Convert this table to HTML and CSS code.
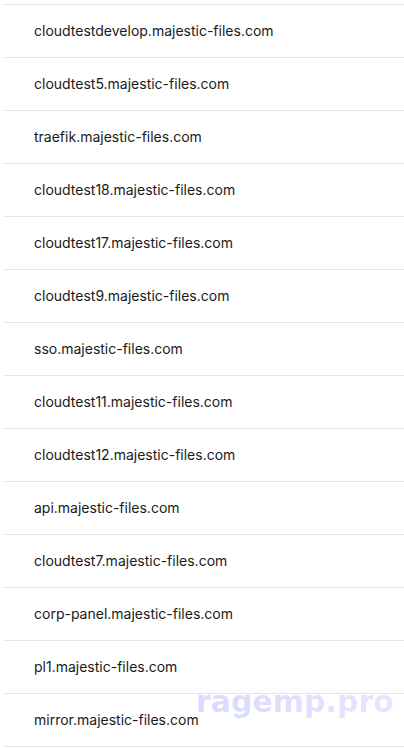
FILE: index.html
```html
<!DOCTYPE html>
<html lang="en">
<head>
<meta charset="utf-8">
<title>Domains</title>
<link rel="stylesheet" href="styles.css">
</head>
<body>
<ul class="list">
  <li class="row">cloudtestdevelop.majestic-files.com</li>
  <li class="row">cloudtest5.majestic-files.com</li>
  <li class="row">traefik.majestic-files.com</li>
  <li class="row">cloudtest18.majestic-files.com</li>
  <li class="row">cloudtest17.majestic-files.com</li>
  <li class="row">cloudtest9.majestic-files.com</li>
  <li class="row">sso.majestic-files.com</li>
  <li class="row">cloudtest11.majestic-files.com</li>
  <li class="row">cloudtest12.majestic-files.com</li>
  <li class="row">api.majestic-files.com</li>
  <li class="row">cloudtest7.majestic-files.com</li>
  <li class="row">corp-panel.majestic-files.com</li>
  <li class="row">pl1.majestic-files.com</li>
  <li class="row">mirror.majestic-files.com</li>
</ul>
<div class="watermark">ragemp.pro</div>
</body>
</html>
```
FILE: styles.css
```css
html, body {
  margin: 0;
  padding: 0;
  background: #ffffff;
}
body {
  font-family: Inter, "Noto Sans", sans-serif;
  color: #1a1a1a;
  position: relative;
  height: 749px;
  overflow: hidden;
}
.list {
  list-style: none;
  margin: 4px 0 0 4px;
  padding: 0;
}
.row {
  box-sizing: border-box;
  height: 53px;
  border-top: 1px solid #e5e5e5;
  display: flex;
  align-items: center;
  padding: 0 0 2px 30px;
  font-size: 14px;
}
.row:last-child {
  height: 54px;
  border-bottom: 1px solid #e5e5e5;
}
.watermark {
  position: absolute;
  left: 196px;
  top: 685px;
  font-family: "DejaVu Sans", sans-serif;
  font-weight: bold;
  font-size: 30px;
  line-height: 34px;
  background: linear-gradient(90deg, #d6dbff, #ebe2ff);
  -webkit-background-clip: text;
  background-clip: text;
  color: transparent;
}
```
